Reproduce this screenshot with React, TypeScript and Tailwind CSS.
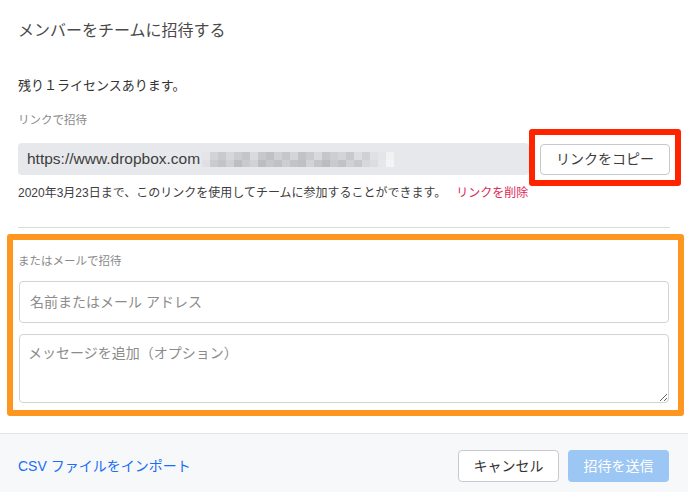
import React from 'react'

const font = { fontFamily: '"Liberation Sans", "Noto Sans CJK JP", sans-serif' }

// pixelated part of the invite link
const blurTop = [
  'bg-[#e4e5e8]', 'bg-[#d2d3d6]', 'bg-[#c9cacd]', 'bg-[#d6d7da]', 'bg-[#cbcccf]', 'bg-[#c4c5c8]',
  'bg-[#d9dadd]', 'bg-[#c7c8cb]', 'bg-[#bfc0c3]', 'bg-[#cfd0d3]', 'bg-[#c6c7ca]', 'bg-[#d4d5d8]',
  'bg-[#c2c3c6]', 'bg-[#cacbce]', 'bg-[#d8d9dc]', 'bg-[#c5c6c9]', 'bg-[#cdced1]', 'bg-[#d3d4d7]',
  'bg-[#c8c9cc]', 'bg-[#dcdde0]', 'bg-[#d0d1d4]', 'bg-[#e0e1e4]', 'bg-[#e4e5e8]', 'bg-[#f2f2f3]',
]
const blurBottom = [
  'bg-[#dfe0e3]', 'bg-[#cacbce]', 'bg-[#c3c4c7]', 'bg-[#cfd0d3]', 'bg-[#bdbec1]', 'bg-[#c9cacd]',
  'bg-[#d1d2d5]', 'bg-[#bcbdc0]', 'bg-[#c6c7ca]', 'bg-[#c0c1c4]', 'bg-[#cdced1]', 'bg-[#c3c4c7]',
  'bg-[#bfc0c3]', 'bg-[#d2d3d6]', 'bg-[#c4c5c8]', 'bg-[#bbbcbf]', 'bg-[#c9cacd]', 'bg-[#c1c2c5]',
  'bg-[#d0d1d4]', 'bg-[#c7c8cb]', 'bg-[#d7d8db]', 'bg-[#dcdde0]', 'bg-[#e6e7ea]', 'bg-[#f4f4f5]',
]

export default function App() {
  return (
    <div className="w-[688px] h-[492px] bg-white flex flex-col overflow-hidden text-[#3d3d3d]" style={font}>
      <div className="px-[18px] flex-1">
        <div className="pt-[20px] text-[16px] leading-[22px] text-[#4a4a4a]">メンバーをチームに招待する</div>

        <div className="mt-[34px] text-[13px] leading-[20px] text-[#333]">残り１ライセンスあります。</div>
        <div className="mt-[16px] text-[11.5px] leading-[16px] text-[#8a8a8a]">リンクで招待</div>

        <div className="mt-[15px] flex items-center gap-[11px]">
          <div className="flex-1 h-[32px] rounded-[4px] bg-[#e6e8eb] flex items-center pl-[9px] text-[15.5px] text-[#3d3d3d] overflow-hidden">
            <span>https://www.dropbox.com</span>
            <div className="flex flex-col ml-[2px]">
              <div className="flex">
                {blurTop.map((c, i) => <div key={i} className={`w-[8px] h-[8px] ${c}`} />)}
              </div>
              <div className="flex">
                {blurBottom.map((c, i) => <div key={i} className={`w-[8px] h-[7px] ${c}`} />)}
              </div>
            </div>
          </div>
          <div className="relative">
            <button className="w-[130px] h-[31px] rounded-[4px] border border-[#c6c9ce] bg-white text-[14px] text-[#3d3d3d]">
              リンクをコピー
            </button>
            <div className="absolute left-[-11px] right-[-11px] top-[-15px] bottom-[-11px] border-[6px] border-[#ff2300] rounded-[3px] pointer-events-none" />
          </div>
        </div>

        <div className="mt-[9px] text-[12px] leading-[18px] text-[#3d3d3d]">
          2020年3月23日まで、このリンクを使用してチームに参加することができます。
          <span className="ml-[10px] text-[#dd2a55]">リンクを削除</span>
        </div>

        <div className="mt-[25px] h-px bg-[#dcdcdc]" />

        <div className="relative mt-[6px]">
          <div className="absolute left-[-11px] right-[-14px] top-0 bottom-[-13px] border-[6px] border-[#ff961f] rounded-[3px] pointer-events-none z-10" />
          <div className="pt-[19px] text-[11.5px] leading-[16px] text-[#8a8a8a]">またはメールで招待</div>
          <input
            className="mt-[12px] w-[650px] ml-px h-[42px] rounded-[4px] border border-[#d3d3d3] px-[10px] text-[14px] outline-none placeholder:text-[#8c8c8c]"
            placeholder="名前またはメール アドレス"
            style={font}
          />
          <textarea
            className="block mt-[11px] w-[650px] ml-px h-[69px] rounded-[4px] border border-[#d3d3d3] px-[8px] py-[8px] text-[14px] outline-none placeholder:text-[#8c8c8c]"
            placeholder="メッセージを追加（オプション）"
            style={font}
          />
        </div>
      </div>

      <div className="h-[59px] shrink-0 border-t border-[#e3e4e6] bg-[#f7f8fa] px-[18px] pt-[16px] flex items-start justify-between">
        <a className="mt-[7px] text-[14px] leading-[18px] text-[#1a6ef5]">CSV ファイルをインポート</a>
        <div className="flex gap-[9px] mr-[1px]">
          <button className="w-[101px] h-[32px] rounded-[4px] border border-[#c6c9ce] bg-white text-[14px] text-[#333]">キャンセル</button>
          <button className="w-[101px] h-[32px] rounded-[4px] bg-[#9cc6f3] text-[14px] text-white">招待を送信</button>
        </div>
      </div>
    </div>
  )
}
